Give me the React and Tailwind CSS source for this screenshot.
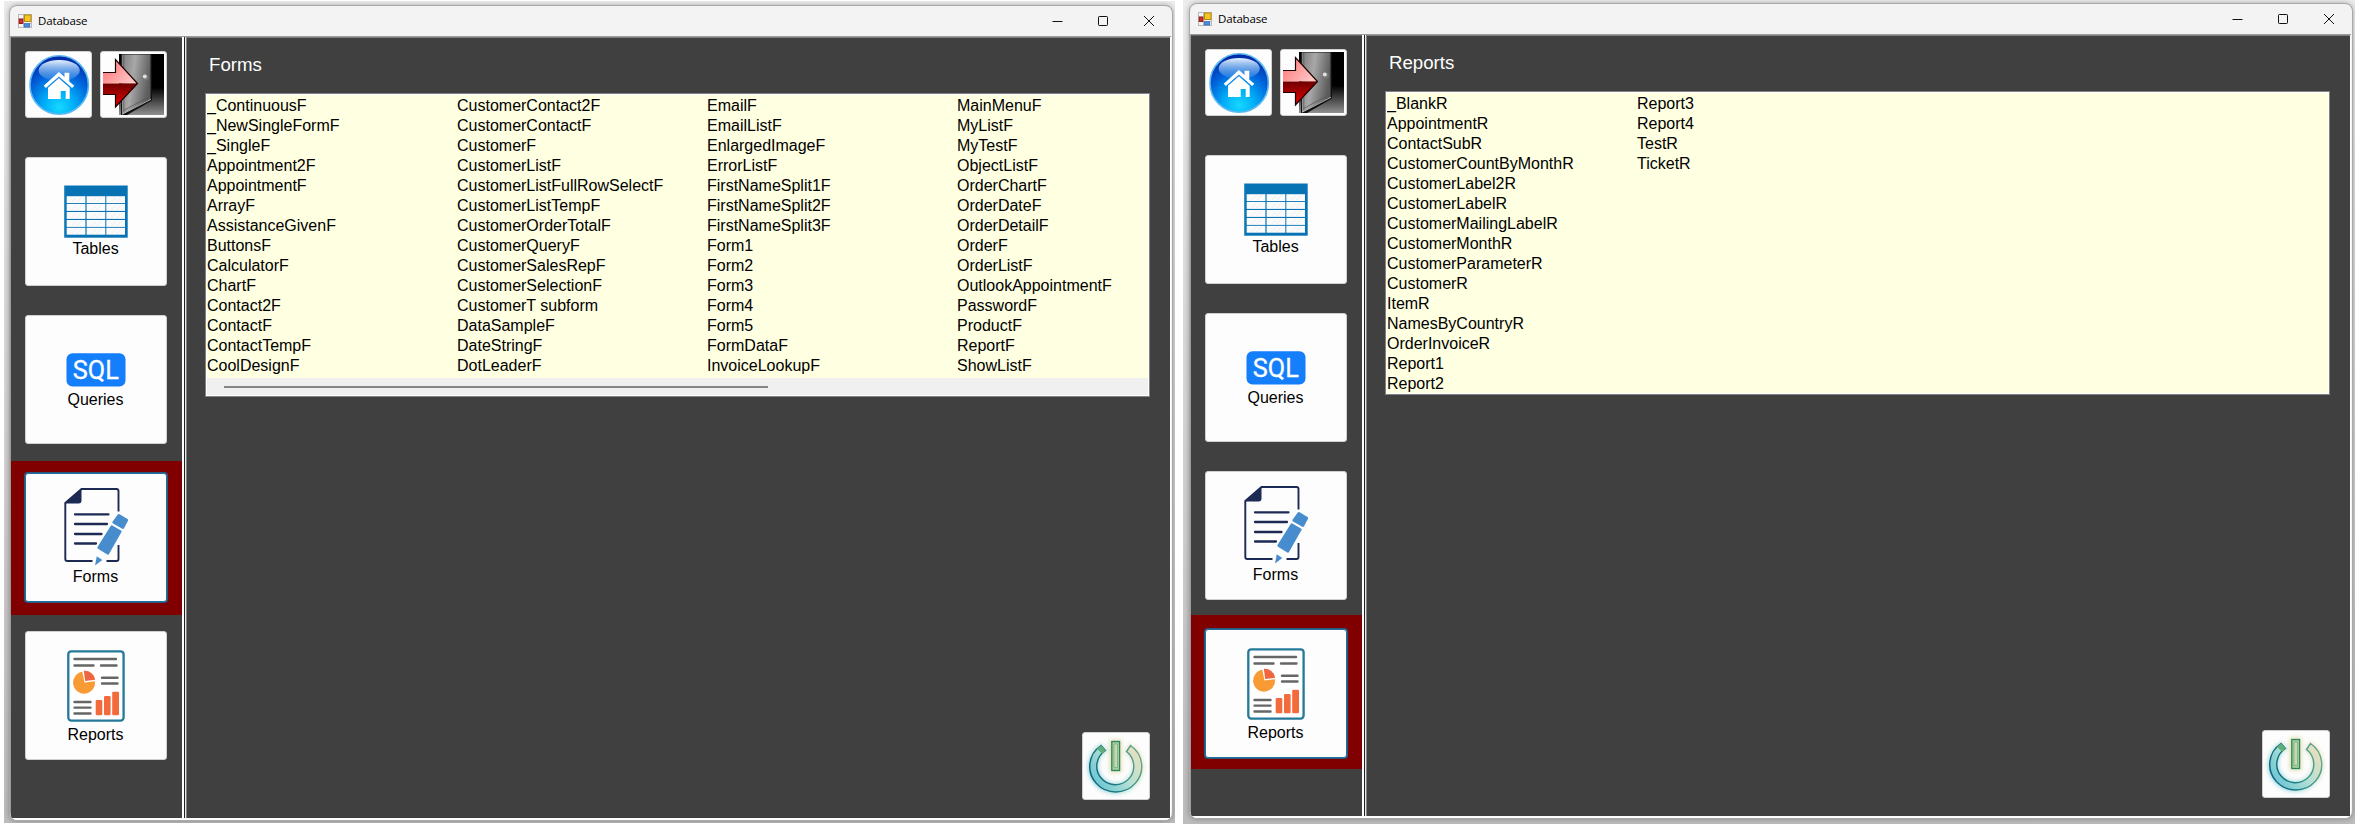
import React from "react";

const forms = [
  ["_ContinuousF", "_NewSingleFormF", "_SingleF", "Appointment2F", "AppointmentF", "ArrayF", "AssistanceGivenF", "ButtonsF", "CalculatorF", "ChartF", "Contact2F", "ContactF", "ContactTempF", "CoolDesignF"],
  ["CustomerContact2F", "CustomerContactF", "CustomerF", "CustomerListF", "CustomerListFullRowSelectF", "CustomerListTempF", "CustomerOrderTotalF", "CustomerQueryF", "CustomerSalesRepF", "CustomerSelectionF", "CustomerT subform", "DataSampleF", "DateStringF", "DotLeaderF"],
  ["EmailF", "EmailListF", "EnlargedImageF", "ErrorListF", "FirstNameSplit1F", "FirstNameSplit2F", "FirstNameSplit3F", "Form1", "Form2", "Form3", "Form4", "Form5", "FormDataF", "InvoiceLookupF"],
  ["MainMenuF", "MyListF", "MyTestF", "ObjectListF", "OrderChartF", "OrderDateF", "OrderDetailF", "OrderF", "OrderListF", "OutlookAppointmentF", "PasswordF", "ProductF", "ReportF", "ShowListF"],
];

const reports = [
  ["_BlankR", "AppointmentR", "ContactSubR", "CustomerCountByMonthR", "CustomerLabel2R", "CustomerLabelR", "CustomerMailingLabelR", "CustomerMonthR", "CustomerParameterR", "CustomerR", "ItemR", "NamesByCountryR", "OrderInvoiceR", "Report1", "Report2"],
  ["Report3", "Report4", "TestR", "TicketR"],
];

function AppIcon() {
  return (
    <svg width="14" height="14" viewBox="0 0 14 14" className="block">
      <rect x="0.5" y="0.5" width="13" height="13" fill="#f4f4f4" stroke="#b9b9b9" />
      <path d="M5.5 0v14M0 9.5h14" stroke="#b9b9b9" />
      <rect x="6.5" y="1" width="6.5" height="6.5" fill="#f7c520" stroke="#b58a10" />
      <rect x="1.2" y="5" width="3.6" height="4.4" fill="#d42f2a" stroke="#8d1512" />
      <rect x="6.3" y="9.8" width="5.4" height="3.2" fill="#4f8fe6" stroke="#2d64b4" strokeWidth="0.8" />
    </svg>
  );
}

function HomeIcon({ id }) {
  return (
    <svg width="63" height="63" viewBox="-1.7 -1.5 63 63" className="block">
      <defs>
        <radialGradient id={id + "g"} cx="0.5" cy="0.88" r="0.88">
          <stop offset="0" stopColor="#16d8ff" />
          <stop offset="0.3" stopColor="#00aef8" />
          <stop offset="0.65" stopColor="#0062da" />
          <stop offset="1" stopColor="#0023a0" />
        </radialGradient>
        <linearGradient id={id + "s"} x1="0" y1="0" x2="0" y2="1">
          <stop offset="0" stopColor="#e6f2ff" />
          <stop offset="1" stopColor="#3a8de6" stopOpacity="0.45" />
        </linearGradient>
      </defs>
      <circle cx="30.5" cy="30.5" r="29.2" fill={"url(#" + id + "g)"} stroke="#5cb8f0" strokeWidth="1.6" />
      <ellipse cx="30.5" cy="16" rx="20.5" ry="10.5" fill={"url(#" + id + "s)"} />
      <path d="M15 31.3 30.2 17.6l5.6 5V18.2h4.8v8.7l5 4.4-2.2 2.3L30.2 21.9 17.2 33.6Z" fill="#fff" />
      <path d="M19.300 33.200 30.200 23.800 41 33.200V44.600H37V36.600H32V44.600H19.300Z" fill="#fff" />
    </svg>
  );
}

function DoorIcon({ id }) {
  return (
    <svg width="61" height="61" viewBox="0 0 61 61" className="block">
      <defs>
        <linearGradient id={id + "d"} x1="0" y1="0" x2="1" y2="0.3">
          <stop offset="0" stopColor="#7c7c7c" />
          <stop offset="0.45" stopColor="#a8a8a8" />
          <stop offset="1" stopColor="#5c5c5c" />
        </linearGradient>
        <linearGradient id={id + "b"} x1="0" y1="0" x2="0" y2="1">
          <stop offset="0.55" stopColor="#000" />
          <stop offset="1" stopColor="#909090" />
        </linearGradient>
        <linearGradient id={id + "t"} x1="0" y1="0" x2="1" y2="0.6">
          <stop offset="0" stopColor="#ff6f6f" />
          <stop offset="1" stopColor="#ffc4c4" />
        </linearGradient>
        <linearGradient id={id + "r"} x1="0" y1="0" x2="0" y2="1">
          <stop offset="0" stopColor="#6e0000" />
          <stop offset="0.7" stopColor="#c80000" />
          <stop offset="1" stopColor="#e00000" />
        </linearGradient>
      </defs>
      <rect x="16" y="0" width="45" height="61" fill={"url(#" + id + "b)"} />
      <path d="M18 0h31v46.500L24 61h-6z" fill="#111" />
      <path d="M18.800 0.500H47.500V45L19 60Z" fill={"url(#" + id + "d)"} />
      <path d="M20.800 1v57" stroke="#555" strokeWidth="0.7" />
      <path d="M20.500 56.500 47.300 42" stroke="#555" strokeWidth="0.700" />
      <path d="M19 60.300 48 45.300" stroke="#ddd" strokeWidth="0.8" />
      <circle cx="42.500" cy="23.500" r="3.300" fill="#777" />
      <circle cx="41.800" cy="22.600" r="2" fill="#e0e0e0" />
      <path d="M0 18.500H12.500V5.600L34.500 29.500H0Z" fill={"url(#" + id + "t)"} />
      <path d="M0 29.500H34.500L12.500 53V40.500H0Z" fill={"url(#" + id + "r)"} />
      <path d="M0 18.500H12.500V5.600L34.500 29.500 12.500 53V40.500H0" fill="none" stroke="#1a0000" strokeWidth="1.200" />
    </svg>
  );
}

function TableIcon() {
  const cols = [2.7, 22.6, 42.3];
  const rows = [11.2, 19, 27, 35, 42.8];
  return (
    <svg width="64" height="53" viewBox="0 0 64 53" className="block">
      <rect x="0.2" y="0.5" width="63.500" height="52.200" fill="#0873b4" />
      <path d="M0.700 1v51.200" stroke="#3b94c8" strokeWidth="0.800" />
      {rows.map((y) => cols.map((x) => <rect key={x + "-" + y} x={x} y={y} width="18.700" height="6.900" fill="#fbfbfb" />))}
      {rows.map((y) => cols.map((x) => <path key={x + "-" + y} d={"M" + (x + 5) + " " + (y + 6) + "l5-5M" + (x + 10) + " " + (y + 6) + "l5-5"} stroke="#eeeeee" strokeWidth="1" />))}
    </svg>
  );
}

function SqlIcon() {
  return (
    <svg width="60" height="34" viewBox="0 0 60 34" className="block">
      <rect x="0.500" y="0.300" width="59" height="33.200" rx="6" fill="#147efb" />
      <text x="6.800" y="25.800" fill="#fff" stroke="#fff" strokeWidth="0.3" fontFamily="Roboto, sans-serif" fontSize="25.500" fontWeight="400" textLength="46" lengthAdjust="spacingAndGlyphs">SQL</text>
    </svg>
  );
}

function FormIcon() {
  return (
    <svg width="65" height="78" viewBox="0 0 65 78" className="block">
      <path d="M54.500 23.500V3Q54.500 1 52.500 1H17.500L1.300 15V71Q1.300 73 3.300 73H28.500M42.500 73H52.500Q54.500 73 54.500 71V57" fill="none" stroke="#1d2b54" strokeWidth="1.900" />
      <path d="M17.500 0.500V12.500Q17.500 15.500 14.500 15.500H0.500Z" fill="#1d2b54" />
      <path d="M11 26.300H44.500M11 36H43M11 46H37.500M11 55.500H32" stroke="#1d2b54" strokeWidth="2.300" strokeLinecap="round" />
      <path d="M54 26.300Q55 25.800 56 26.400L63.500 31Q64.500 31.600 64 32.800L60 40.300Q59.300 41.200 58.300 40.700L49 35.500Q48 34.800 48.500 33.800Z" fill="#478dce" />
      <path d="M46.800 37.800Q47.400 37 48.300 37.500L57 42.500Q58 43 57.500 44L45 66Q44.500 67.200 43.300 66.500L34 60.800Q33 60.200 33.500 59Z" fill="#478dce" />
      <path d="M32.800 68.300 38.300 72 31 77.500Z" fill="#478dce" />
    </svg>
  );
}

function ReportIcon() {
  return (
    <svg width="58" height="72" viewBox="0 0 58 72" className="block">
      <rect x="1.300" y="1.300" width="55.300" height="69.300" rx="3" fill="#fff" stroke="#24799b" strokeWidth="2.300" />
      <path d="M7.500 9H49M7.500 15.500H26.500M34 15.500H49.500M35 27.800H50.500M35 33.500H50.500M7.500 52H23.500M7.500 57.600H23.500M7.500 63.500H23.500" stroke="#666" strokeWidth="2.400" strokeLinecap="round" />
      <path d="M15.300 21.800A11 11 0 1 0 28 31.200L17.500 32.600Z" fill="#f99b35" />
      <path d="M16.800 20.700A10.500 10.500 0 0 1 28.200 29.800L18.200 31.100Z" fill="#ee6640" />
      <rect x="28.700" y="50" width="6.600" height="15.200" rx="1.300" fill="#f36b3d" />
      <rect x="37" y="46" width="6.600" height="19.200" rx="1.300" fill="#f36b3d" />
      <rect x="45.200" y="41.700" width="6.800" height="23.500" rx="1.300" fill="#f36b3d" />
    </svg>
  );
}

function PowerIcon({ id }) {
  const ring = "M19 13.500A26 25.500 0 1 0 48.500 13.500L44.500 19.500A18.500 18.500 0 1 1 23.500 18.500Z";
  return (
    <svg width="66" height="66" viewBox="1 1 66 66" className="block">
      <defs>
        <linearGradient id={id + "p"} x1="0.100" y1="0.800" x2="1" y2="0.200">
          <stop offset="0" stopColor="#6cc6d4" />
          <stop offset="0.500" stopColor="#b4e0d4" />
          <stop offset="1" stopColor="#ebe0bd" />
        </linearGradient>
        <linearGradient id={id + "q"} x1="0" y1="0.600" x2="1" y2="0.300">
          <stop offset="0" stopColor="#0b6079" />
          <stop offset="0.500" stopColor="#228586" />
          <stop offset="1" stopColor="#6ba887" />
        </linearGradient>
        <filter id={id + "f"} x="-20%" y="-20%" width="140%" height="140%">
          <feGaussianBlur stdDeviation="2.200" />
        </filter>
      </defs>
      <g filter={"url(#" + id + "f)"} opacity="0.800">
        <path d={ring} fill={"url(#" + id + "p)"} stroke={"url(#" + id + "p)"} strokeWidth="3.500" />
        <rect x="29" y="9" width="9" height="30" fill="#dcd8a0" stroke="#dcd8a0" strokeWidth="3" />
      </g>
      <path d={ring} fill={"url(#" + id + "p)"} stroke={"url(#" + id + "q)"} strokeWidth="1.400" />
      <path d="M19 13.500 23.500 18.500 20.500 22 15 17Z" fill="#5fae7c" />
      <rect x="29.800" y="9.500" width="7.800" height="29" fill="#a9cf9c" stroke="#2b8560" strokeWidth="1.300" />
      <path d="M32 12v23.500h3.500V12z" fill="#d0d6ac" stroke="#5ca67c" strokeWidth="0.600" />
    </svg>
  );
}

const slots = [
  { label: "Tables", Icon: TableIcon, slot: "h-[158px] pt-[12px]", pad: "pt-[27px]", text: "mt-[2px]" },
  { label: "Queries", Icon: SqlIcon, slot: "h-[158px] pt-[12px]", pad: "pt-[37px]", text: "mt-[4px]" },
  { label: "Forms", Icon: FormIcon, slot: "mb-[2px] h-[154px] pt-[12px]", pad: "pt-[14px]", text: "mt-[2px]" },
  { label: "Reports", Icon: ReportIcon, slot: "h-[154px] pt-[14px]", pad: "pt-[18px]", text: "mt-[4px]" },
];

function Window({ id, title, columns, scroll, active }) {
  return (
    <div className="flex h-[816px] w-[1164px] flex-col overflow-hidden rounded-lg border border-[#a9a9a9] bg-[#f3f3f3] shadow-[0_0_5px_rgba(0,0,0,0.3)]">
      <div className="flex h-[30px] shrink-0 items-center pl-2">
        <AppIcon />
        <span className="ml-[6px] font-['Open_Sans',sans-serif] text-[11.500px] leading-4 tracking-[-0.150px] text-black">Database</span>
        <div className="ml-auto flex items-center pr-[17px]">
          <svg width="103" height="12" viewBox="0 0 103 12" fill="none" stroke="#111" className="block">
            <path d="M0.500 6.500h10" />
            <rect x="46.500" y="1.500" width="9" height="9" rx="0.800" />
            <path d="m92 1 10 10M102 1 92 11" />
          </svg>
        </div>
      </div>
      <div className="mr-px flex min-h-0 flex-1 border-t border-l border-[#9a9a9a] bg-white pb-[2px]">
        <div className="flex w-[171px] shrink-0 flex-col border-t border-[#606060] bg-[#404040]">
          <div className="flex gap-2 pt-[13px] pl-[14px]">
            <button className="flex size-[67px] items-center justify-center rounded-[3px] border border-[#d0d0d0] bg-[#fdfdfd]"><HomeIcon id={id + "h"} /></button>
            <button className="flex size-[67px] items-center justify-center rounded-[3px] border border-[#d0d0d0] bg-[#fdfdfd]"><DoorIcon id={id + "e"} /></button>
          </div>
          <div className="mt-[27px] flex flex-col">
            {slots.map(({ label, Icon, slot, pad, text }) => (
              <div key={label} className={"pl-[14px] " + slot + " " + (active === label ? "bg-[#800000]" : "")}>
                <button className={"flex h-[129px] w-[142px] flex-col items-center rounded-[3px] border bg-[#fdfdfd] " + pad + " " + (active === label ? "border-[#1d6fa5] shadow-[0_0_0_1px_#2d5677]" : "border-[#d0d0d0]")}>
                  <Icon />
                  <span className={"pr-px text-base leading-[18px] text-black " + text}>{label}</span>
                </button>
              </div>
            ))}
          </div>
        </div>
        <div className="w-[2px] shrink-0 bg-white" />
        <div className="w-px shrink-0 bg-[#222]" />
        <div className="w-px shrink-0 bg-[#e8e8e8]" />
        <div className="mr-px flex min-w-0 flex-1 flex-col border-t border-l border-[#808080] bg-[#404040]">
          <h1 className="mt-[16px] ml-[22px] text-[18.670px] leading-[22px] text-white">{title}</h1>
          <div className="mt-[17px] ml-[18px] flex h-[304px] w-[945px] flex-col border border-[#828282] bg-white p-px">
            <div className="flex min-h-0 flex-1 overflow-hidden bg-[#ffffe1] pt-[1px]">
              {columns.map((col, i) => (
                <ul key={i} className="w-[250px] shrink-0 text-base leading-5 text-black">
                  {col.map((t) => <li key={t} className="h-5">{t}</li>)}
                </ul>
              ))}
            </div>
            {scroll && (
              <div className="flex h-[17px] shrink-0 items-center bg-[#f0f0f0] pl-[17px]">
                <div className="h-[2px] w-[544px] bg-[#858585]" />
              </div>
            )}
          </div>
          <button className="mt-auto mr-[20px] mb-[18px] flex size-[68px] items-center justify-center self-end rounded-[3px] border border-[#d0d0d0] bg-[#fdfdfd]"><PowerIcon id={id + "w"} /></button>
        </div>
      </div>
    </div>
  );
}

export default function App() {
  return (
    <div className="flex h-[824px] w-[2355px] gap-2 overflow-hidden bg-white pl-1 font-['Liberation_Sans',Arial,sans-serif]">
      <div className="mt-px h-[822px] w-[1171px] shrink-0 overflow-hidden bg-linear-to-b from-[#ececec] to-[#bcbcbc] pt-1 pl-[5px]">
        <Window id="a" title="Forms" columns={forms} scroll active="Forms" />
      </div>
      <div className="h-[824px] w-[1172px] shrink-0 overflow-hidden bg-linear-to-b from-[#ececec] to-[#bcbcbc] pt-[3px] pl-[6px]">
        <Window id="b" title="Reports" columns={reports} active="Reports" />
      </div>
    </div>
  );
}
